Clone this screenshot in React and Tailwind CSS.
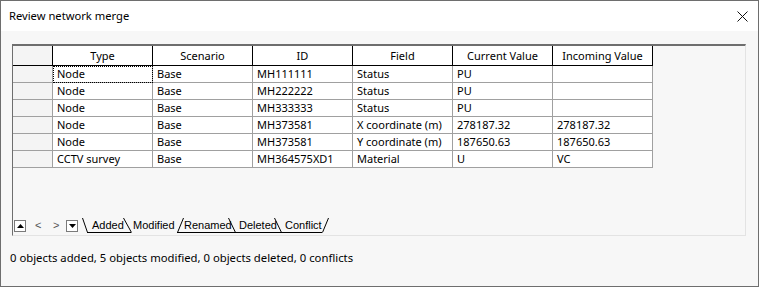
import React from "react";

const columns = ["Type", "Scenario", "ID", "Field", "Current Value", "Incoming Value"];

const rows = [
  ["Node", "Base", "MH111111", "Status", "PU", ""],
  ["Node", "Base", "MH222222", "Status", "PU", ""],
  ["Node", "Base", "MH333333", "Status", "PU", ""],
  ["Node", "Base", "MH373581", "X coordinate (m)", "278187.32", "278187.32"],
  ["Node", "Base", "MH373581", "Y coordinate (m)", "187650.63", "187650.63"],
  ["CCTV survey", "Base", "MH364575XD1", "Material", "U", "VC"],
];

const tabs = [
  { label: "Added", w: "w-[41px]" },
  { label: "Modified", w: "w-[51px]" },
  { label: "Renamed", w: "w-[55px]" },
  { label: "Deleted", w: "w-[46px]" },
  { label: "Conflict", w: "w-[40px]" },
];

function TabStrip() {
  return (
    <div className="relative flex h-[17px] items-center font-['Liberation_Sans',Arial,sans-serif] text-[11px] text-black">
      <svg className="absolute left-0 top-0" width="340" height="17" viewBox="0 0 340 17">
        <g stroke="#000" strokeWidth="1" fill="none">
          <line x1="69.5" y1="1" x2="74.5" y2="15.5" />
          <line x1="74" y1="15.5" x2="118" y2="15.5" />
          <line x1="110.5" y1="1" x2="118.5" y2="15.5" />
          <line x1="164.5" y1="15.5" x2="170.5" y2="1" />
          <line x1="164" y1="15.5" x2="309" y2="15.5" />
          <line x1="215.5" y1="1" x2="222.5" y2="15.5" />
          <line x1="261.5" y1="1" x2="268.5" y2="15.5" />
          <line x1="309.5" y1="15.5" x2="315.5" y2="1" />
        </g>
      </svg>
      <div className="relative ml-[1px] flex h-[12px] w-[12px] items-center justify-center border border-[#7a7a7a] bg-white">
        <svg width="7" height="4" viewBox="0 0 7 4">
          <polygon points="0,4 7,4 3.5,0" fill="#000" />
        </svg>
      </div>
      <span className="relative ml-[9px] w-[6px] text-[#555]">&lt;</span>
      <span className="relative ml-[12px] w-[6px] text-[#555]">&gt;</span>
      <div className="relative ml-[7px] flex h-[12px] w-[12px] items-center justify-center border border-[#7a7a7a] bg-white">
        <svg width="7" height="4" viewBox="0 0 7 4">
          <polygon points="0,0 7,0 3.5,4" fill="#000" />
        </svg>
      </div>
      <div className="relative ml-[14px] flex">
        {tabs.map((t) => (
          <span key={t.label} className={`${t.w} leading-[15px]`}>
            {t.label}
          </span>
        ))}
      </div>
    </div>
  );
}

export default function App() {
  return (
    <div className="flex h-[287px] w-[759px] flex-col border border-[#6e6e6e] bg-[#f7f7f7] font-['Noto_Sans',sans-serif] text-[11px] text-black">
      <div className="flex h-[30px] shrink-0 items-center justify-between bg-white pl-[8px] pr-[10px]">
        <span className="text-[11.2px]">Review network merge</span>
        <svg width="11" height="11" viewBox="0 0 11 11">
          <path d="M0.5 0.5L10.5 10.5M10.5 0.5L0.5 10.5" stroke="#111" strokeWidth="1" />
        </svg>
      </div>

      <div className="px-[11px] pt-[13px]">
        <div className="flex h-[192px] w-[734px] flex-col border-l border-t-2 border-r border-b border-l-[#6e6e6e] border-t-[#6e6e6e] border-r-[#e3e3e3] border-b-[#e3e3e3]">
          <div className="flex-1">
            <div className="grid grid-cols-[40px_repeat(6,100px)]">
              <div className="h-[20px] border-r border-b border-black bg-[#f4f4f4]" />
              {columns.map((c) => (
                <div
                  key={c}
                  className="flex h-[20px] items-center justify-center border-r border-b border-black bg-white pt-[1px]"
                >
                  {c}
                </div>
              ))}
              {rows.map((r, i) => (
                <React.Fragment key={i}>
                  <div className="h-[17px] border-r border-b border-[#a0a0a0] bg-[#f4f4f4]" />
                  {r.map((v, j) => (
                    <div
                      key={j}
                      className={`flex h-[17px] items-center border-r border-b border-[#a0a0a0] bg-white pl-[4px] ${
                        i === 0 && j === 0 ? "outline outline-1 outline-dotted outline-black outline-offset-[-1px]" : ""
                      }`}
                    >
                      {v}
                    </div>
                  ))}
                </React.Fragment>
              ))}
            </div>
          </div>
          <TabStrip />
          <div className="h-[1px]" />
        </div>
      </div>

      <div className="flex flex-1 items-center pl-[9px] pb-[6px] text-[11.3px]">
        0 objects added, 5 objects modified, 0 objects deleted, 0 conflicts
      </div>
    </div>
  );
}
